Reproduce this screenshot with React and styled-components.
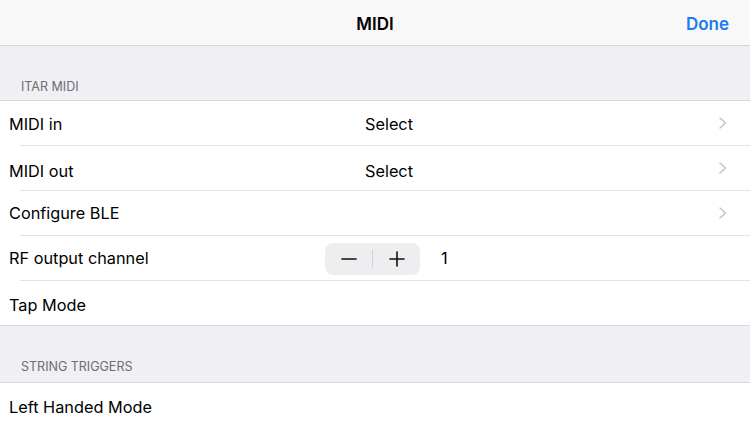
import React from 'react';
import styled, { createGlobalStyle } from 'styled-components';

const GlobalStyle = createGlobalStyle`
  html, body {
    margin: 0;
    padding: 0;
    background: #efeff4;
    font-family: Inter, "Noto Sans", sans-serif;
    -webkit-font-smoothing: antialiased;
  }
`;

const Page = styled.div`
  width: 750px;
  height: 422px;
  overflow: hidden;
  background: #efeff4;
`;

const NavBar = styled.div`
  height: 46px;
  box-sizing: border-box;
  display: grid;
  grid-template-columns: 1fr auto 1fr;
  align-items: center;
  padding: 2px 21px 0;
  background: #f8f8f8;
  border-bottom: 1px solid #d6d6da;
`;

const NavTitle = styled.div`
  font-size: 17px;
  font-weight: 600;
  color: #000;
  grid-column: 2;
`;

const NavButton = styled.div`
  justify-self: end;
  font-size: 17px;
  font-weight: 600;
  color: #1a7cf0;
`;

const SectionHeader = styled.div`
  height: ${(props) => props.height}px;
  box-sizing: border-box;
  display: flex;
  align-items: flex-end;
  padding: 0 21px ${(props) => props.bottom}px;
  font-size: 12.5px;
  color: #6d6d72;
  text-transform: uppercase;
  border-bottom: 1px solid #d9d9dd;
`;

const Group = styled.div`
  background: #fff;
  border-bottom: ${(props) => (props.last ? 'none' : '1px solid #d9d9dd')};
`;

const Row = styled.div`
  height: 44px;
  display: grid;
  grid-template-columns: 316px 1fr auto;
  align-items: center;
  padding: 0 23px 0 9px;

  & + & {
    padding-top: 1px;
    background: linear-gradient(#e2e2e5, #e2e2e5) 20px 0 / calc(100% - 20px) 1px no-repeat, #fff;
  }
`;

const Label = styled.div`
  font-size: 16.3px;
  color: #000;
  padding-top: ${(props) => props.nudge * 2 || 0}px;
`;

const Value = styled.div`
  font-size: 16.3px;
  color: #000;
  display: flex;
  align-items: center;
  gap: 21px;
  padding-left: ${(props) => props.offset || 0}px;
  padding-top: ${(props) => props.nudge * 2 || 0}px;
`;

const Stepper = styled.div`
  width: 95px;
  height: 32px;
  border-radius: 8px;
  background: #eeeef0;
  display: grid;
  grid-template-columns: 1fr 1px 1fr;
  align-items: center;
  justify-items: center;
  margin-top: 1px;
`;

const StepDivider = styled.div`
  width: 1px;
  height: 18px;
  background: #d2d2d6;
`;

const Chevron = () => (
  <svg width="8" height="12" viewBox="0 0 8 12" style={{ display: 'block' }}>
    <path d="M1 1 L6.4 6 L1 11" fill="none" stroke="#c4c4c8" strokeWidth="1.5" strokeLinecap="round" strokeLinejoin="round" />
  </svg>
);

const Minus = () => (
  <svg width="16" height="16" viewBox="0 0 16 16" style={{ display: 'block' }}>
    <path d="M1 8 H15" stroke="#111" strokeWidth="1.6" strokeLinecap="round" />
  </svg>
);

const Plus = () => (
  <svg width="16" height="16" viewBox="0 0 16 16" style={{ display: 'block' }}>
    <path d="M1 8 H15 M8 1 V15" stroke="#111" strokeWidth="1.6" strokeLinecap="round" />
  </svg>
);

const rows = [
  { label: 'MIDI in', value: 'Select', chevron: true, nudge: 1 },
  { label: 'MIDI out', value: 'Select', chevron: true, nudge: 3 },
  { label: 'Configure BLE', chevron: true },
  { label: 'RF output channel', stepper: 1 },
  { label: 'Tap Mode', nudge: 2 },
];

export default function App() {
  return (
    <Page>
      <GlobalStyle />
      <NavBar>
        <NavTitle>MIDI</NavTitle>
        <NavButton>Done</NavButton>
      </NavBar>
      <SectionHeader height={55} bottom={6}>ITAR MIDI</SectionHeader>
      <Group>
        {rows.map((r) => (
          <Row key={r.label}>
            <Label nudge={r.nudge}>{r.label}</Label>
            {r.stepper ? (
              <Value>
                <Stepper>
                  <Minus />
                  <StepDivider />
                  <Plus />
                </Stepper>
                {r.stepper}
              </Value>
            ) : (
              <Value offset={40} nudge={r.nudge}>{r.value}</Value>
            )}
            <div>{r.chevron && <Chevron />}</div>
          </Row>
        ))}
      </Group>
      <SectionHeader height={57} bottom={8}>String Triggers</SectionHeader>
      <Group last>
        <Row>
          <Label nudge={2}>Left Handed Mode</Label>
        </Row>
      </Group>
    </Page>
  );
}
